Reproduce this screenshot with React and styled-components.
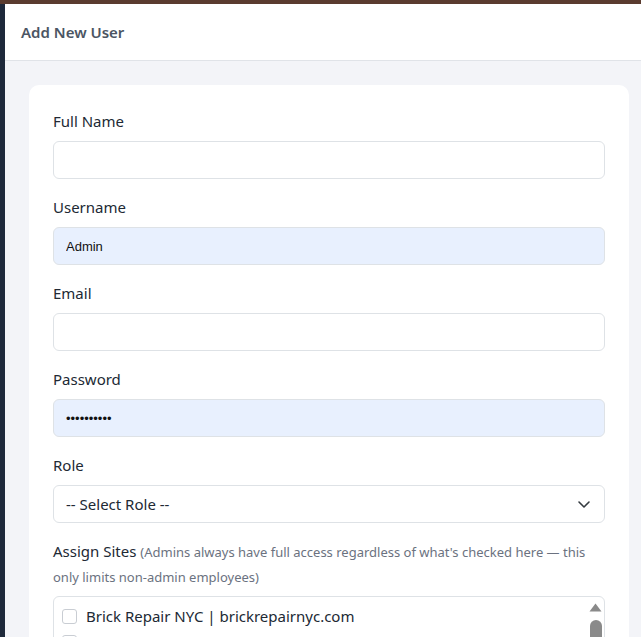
import React from "react";
import styled, { createGlobalStyle } from "styled-components";

const sites = [
  "Brick Repair NYC | brickrepairnyc.com",
  "Bronx Sidewalk Repair | bronxsidewalkrepair.com",
  "Brooklyn Roofing Pros | brooklynroofingpros.com",
  "Queens Masonry | queensmasonry.com",
];

export default function App() {
  return (
    <>
      <GlobalStyle />
      <Shell>
        <TopStripe />
        <Body>
          <SideRail />
          <Main>
            <PageHeader>
              <PageTitle>Add New User</PageTitle>
            </PageHeader>
            <Content>
              <Card>
                <Field>
                  <Label>Full Name</Label>
                  <Input type="text" defaultValue="" />
                </Field>
                <Field>
                  <Label>Username</Label>
                  <Input type="text" defaultValue="Admin" filled />
                </Field>
                <Field>
                  <Label>Email</Label>
                  <Input type="email" defaultValue="" />
                </Field>
                <Field>
                  <Label>Password</Label>
                  <Input type="password" defaultValue="secret1234" filled />
                </Field>
                <Field tight>
                  <Label>Role</Label>
                  <SelectWrap>
                    <Select defaultValue="">
                      <option value="">-- Select Role --</option>
                      <option value="admin">Admin</option>
                      <option value="employee">Employee</option>
                    </Select>
                    <Chevron viewBox="0 0 16 16">
                      <path d="M3 6l5 5 5-5" fill="none" stroke="#343a40" strokeWidth="1.6" strokeLinecap="round" strokeLinejoin="round" />
                    </Chevron>
                  </SelectWrap>
                </Field>
                <Field>
                  <SitesLabel>
                    Assign Sites{" "}
                    <Hint>
                      (Admins always have full access regardless of what's checked here — this only limits non-admin employees)
                    </Hint>
                  </SitesLabel>
                  <SiteBox>
                    {sites.map((s) => (
                      <SiteRow key={s}>
                        <Check type="checkbox" />
                        <span>{s}</span>
                      </SiteRow>
                    ))}
                    <ScrollTrack>
                      <svg width="13" height="9" viewBox="0 0 13 9">
                        <path d="M0.5 8.5L6.5 0.5l6 8z" fill="#8a8a8a" />
                      </svg>
                      <Thumb />
                    </ScrollTrack>
                  </SiteBox>
                </Field>
              </Card>
            </Content>
          </Main>
        </Body>
      </Shell>
    </>
  );
}

const GlobalStyle = createGlobalStyle`
  html, body {
    margin: 0;
    padding: 0;
    height: 100%;
  }
  body {
    font-family: "Noto Sans", "Open Sans", sans-serif;
    background: #f3f4f8;
    overflow: hidden;
  }
  * {
    box-sizing: border-box;
  }
`;

const Shell = styled.div`
  display: flex;
  flex-direction: column;
  height: 100vh;
`;

const TopStripe = styled.div`
  height: 4px;
  background: #5a3b2f;
  flex-shrink: 0;
`;

const Body = styled.div`
  display: flex;
  flex: 1;
  min-height: 0;
`;

const SideRail = styled.div`
  width: 5px;
  background: #1e293b;
  flex-shrink: 0;
`;

const Main = styled.main`
  flex: 1;
  display: flex;
  flex-direction: column;
  background: #f3f4f8;
  min-width: 0;
`;

const PageHeader = styled.header`
  height: 57px;
  background: #fff;
  border-bottom: 1px solid #e0e3e8;
  display: flex;
  align-items: center;
  padding: 0 16px;
  flex-shrink: 0;
`;

const PageTitle = styled.h1`
  margin: 0 0 1px;
  font-size: 15px;
  font-weight: 600;
  color: #4b5563;
`;

const Content = styled.div`
  padding: 24px 12px 0 24px;
`;

const Card = styled.section`
  width: 600px;
  background: #fff;
  border-radius: 10px;
  padding: 26px 24px 24px;
`;

const Field = styled.div`
  display: flex;
  flex-direction: column;
  margin-bottom: ${(p) => (p.tight ? "16px" : "18px")};
`;

const Label = styled.label`
  font-size: 15px;
  line-height: 21px;
  color: #212934;
  margin-bottom: 9px;
`;

const Input = styled.input`
  height: 38px;
  width: 100%;
  border: 1px solid #dee2e6;
  border-radius: 6px;
  padding: 0 12px;
  font-family: ${(p) => (p.filled ? '"Liberation Sans", Arial, sans-serif' : "inherit")};
  font-size: 13px;
  color: #111;
  background: ${(p) => (p.filled ? "#e8f0fe" : "#fff")};
  outline: none;
`;

const SelectWrap = styled.div`
  position: relative;
`;

const Select = styled.select`
  appearance: none;
  width: 100%;
  height: 38px;
  border: 1px solid #dee2e6;
  border-radius: 6px;
  padding: 0 36px 0 12px;
  font-family: inherit;
  font-size: 15px;
  color: #212934;
  background: #fff;
  outline: none;
`;

const Chevron = styled.svg`
  position: absolute;
  right: 13px;
  top: 11px;
  width: 16px;
  height: 16px;
  pointer-events: none;
`;

const SitesLabel = styled.div`
  font-size: 15px;
  line-height: 24px;
  color: #212934;
  margin-bottom: 7px;
`;

const Hint = styled.span`
  font-size: 13px;
  color: #6b7280;
`;

const SiteBox = styled.div`
  position: relative;
  height: 150px;
  overflow: hidden;
  border: 1px solid #dee2e6;
  border-radius: 6px;
  padding: 7px 24px 8px 8px;
`;

const SiteRow = styled.label`
  display: flex;
  align-items: center;
  gap: 9px;
  height: 24px;
  margin-bottom: 2px;
  font-size: 15px;
  color: #212934;
  white-space: nowrap;
`;

const Check = styled.input`
  appearance: none;
  margin: 0;
  width: 15px;
  height: 15px;
  border: 1px solid #c9cdd3;
  border-radius: 3px;
  background: #fff;
  flex-shrink: 0;
`;

const ScrollTrack = styled.div`
  position: absolute;
  top: 6px;
  right: 2px;
  width: 13px;
  display: flex;
  flex-direction: column;
  align-items: center;
  gap: 8px;
`;

const Thumb = styled.div`
  width: 12px;
  height: 60px;
  border-radius: 6px;
  background: #8a8a8a;
`;
